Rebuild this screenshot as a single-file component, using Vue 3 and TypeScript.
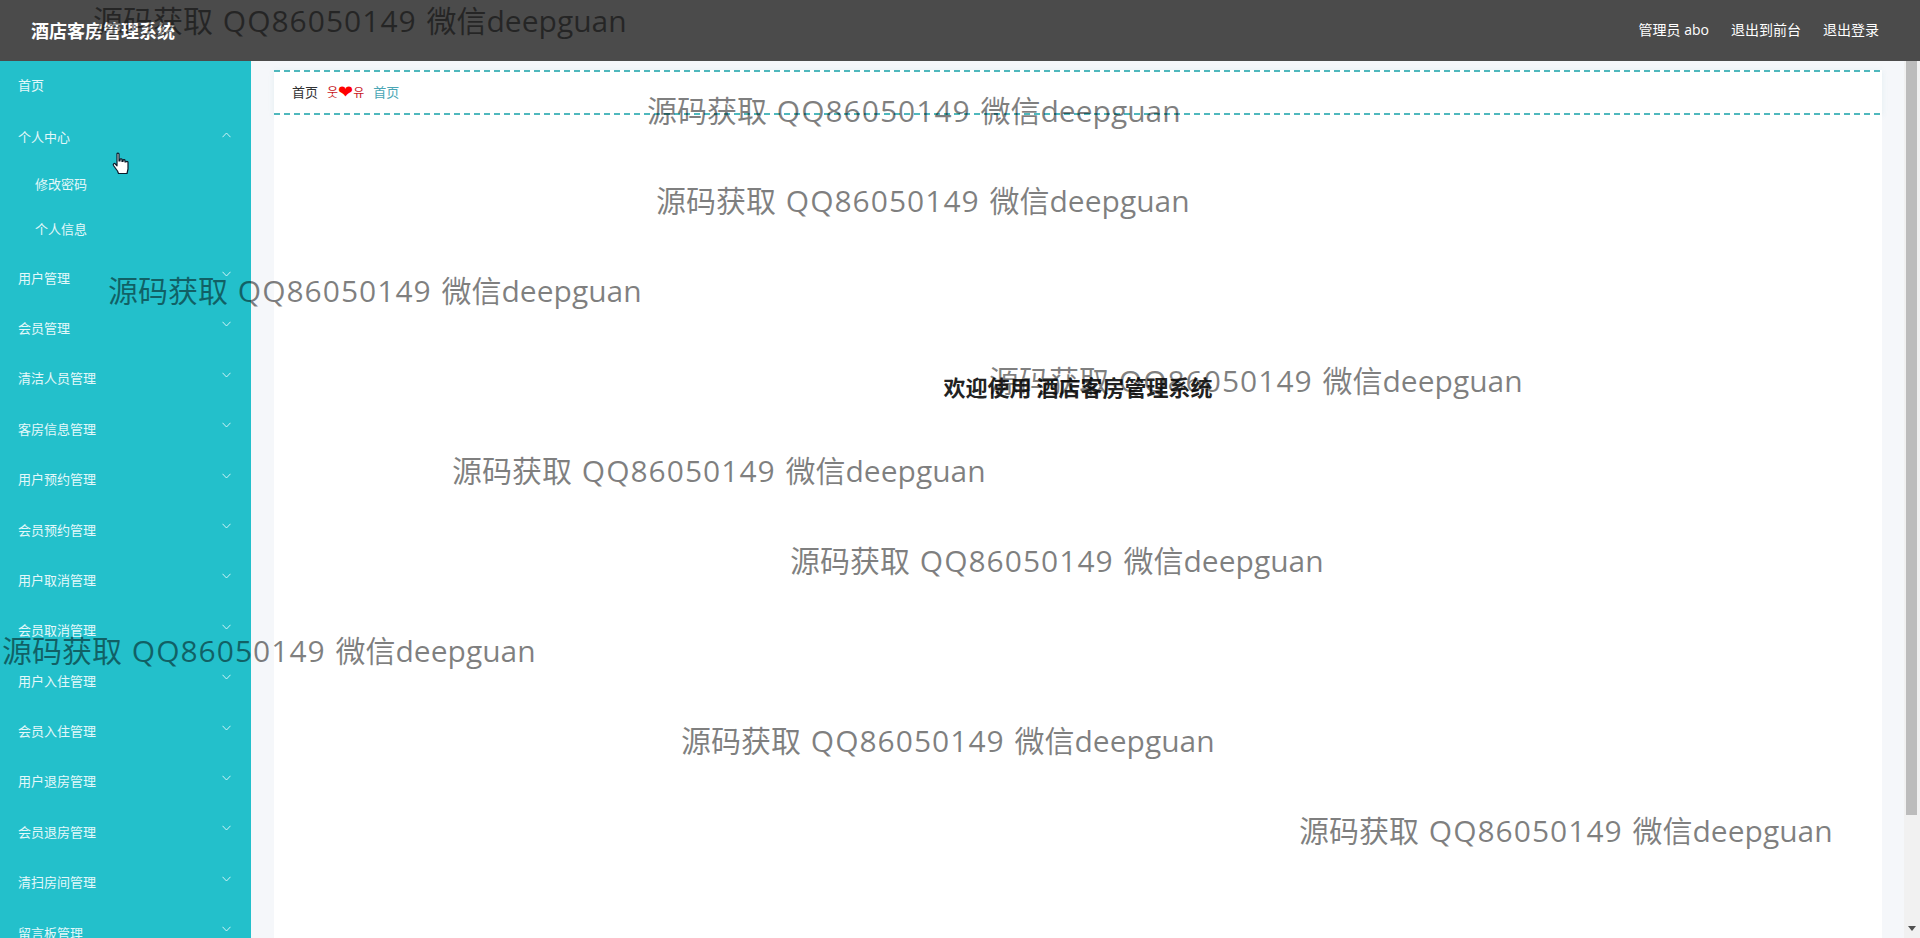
<script setup lang="ts">
interface MenuItem {
  label: string
  open?: boolean
  children?: string[]
}

const menus: MenuItem[] = [
  { label: '个人中心', open: true, children: ['修改密码', '个人信息'] },
  { label: '用户管理' },
  { label: '会员管理' },
  { label: '清洁人员管理' },
  { label: '客房信息管理' },
  { label: '用户预约管理' },
  { label: '会员预约管理' },
  { label: '用户取消管理' },
  { label: '会员取消管理' },
  { label: '用户入住管理' },
  { label: '会员入住管理' },
  { label: '用户退房管理' },
  { label: '会员退房管理' },
  { label: '清扫房间管理' },
  { label: '留言板管理' }
]

const marks = [
  { x: 93, y: 0 },
  { x: 647, y: 90 },
  { x: 656, y: 180 },
  { x: 108, y: 270 },
  { x: 989, y: 360 },
  { x: 452, y: 450 },
  { x: 790, y: 540 },
  { x: 2, y: 630 },
  { x: 681, y: 720 },
  { x: 1299, y: 810 }
]
</script>

<template>
  <div class="page">
    <header class="top">
      <div class="title">酒店客房管理系统</div>
      <div class="top-links">
        <span>管理员 abo</span>
        <span>退出到前台</span>
        <span>退出登录</span>
      </div>
    </header>

    <div class="body">
      <aside class="side">
        <div class="item home">首页</div>
        <template v-for="m in menus" :key="m.label">
          <div class="item">
            <span>{{ m.label }}</span>
            <svg class="chev" :class="{ up: m.open }" width="9" height="6" viewBox="0 0 9 6">
              <path d="M0.5 0.8 L4.5 5 L8.5 0.8" fill="none" stroke="#e4f8fa" stroke-width="0.9" />
            </svg>
          </div>
          <template v-if="m.open">
            <div v-for="c in m.children" :key="c" class="sub">{{ c }}</div>
          </template>
        </template>
      </aside>

      <main class="main">
        <div class="crumbs">
          <span class="crumb">首页</span>
          <span class="deco">웃<b>❤</b>유</span>
          <span class="crumb-now">首页</span>
        </div>
        <section class="panel">
          <h1 class="welcome">欢迎使用 酒店客房管理系统</h1>
        </section>
      </main>

      <div class="scroll">
        <div class="thumb"></div>
        <div class="arrow"></div>
      </div>
    </div>

    <div
      v-for="(w, i) in marks"
      :key="i"
      class="mark"
      :style="{ left: w.x + 'px', top: w.y + 'px' }"
    >源码获取 <span class="qq">QQ86050149</span> 微信deepguan</div>

    <svg class="cursor" width="18" height="24" viewBox="0 0 18 24">
      <path
        d="M5 2 C5 0.8 7 0.8 7 2 L7 9 L8 9 L8 7.6 C8 6.6 10 6.6 10 7.6 L10 9.5 L11 9.5 L11 8.4 C11 7.4 13 7.4 13 8.4 L13 10 L14 10 C14 9 16 9 16 10.2 L16 17 L15 21.5 L6.5 21.5 L5.5 19 L1.5 13.5 C0.6 12 2.4 10.8 3.4 12 L5 13.8 Z"
        fill="#fff"
        stroke="#0b1a2a"
        stroke-width="1.2"
        stroke-linejoin="round"
      />
    </svg>
  </div>
</template>

<style scoped>
.page {
  position: relative;
  display: flex;
  flex-direction: column;
  width: 1920px;
  height: 938px;
  overflow: hidden;
  font-family: 'Noto Sans CJK SC', 'Liberation Sans', sans-serif;
  font-size: 13px;
  background: #f5f7fa;
}

/* top bar */
.top {
  flex: none;
  display: flex;
  align-items: center;
  justify-content: space-between;
  height: 61px;
  padding: 0 41px 0 31px;
  box-sizing: border-box;
  background: #4b4b4b;
  color: #fff;
}
.title {
  font-size: 18px;
  font-weight: 700;
  line-height: 1;
  margin-top: -2px;
}
.top-links {
  display: flex;
  gap: 22px;
  font-family: 'Open Sans', 'Noto Sans CJK SC', sans-serif;
  font-size: 14px;
  line-height: 1;
  margin-top: -1px;
}

.body {
  flex: 1;
  display: flex;
  min-height: 0;
}

/* sidebar */
.side {
  flex: none;
  width: 251px;
  overflow: hidden;
  background: #23c0cb;
  color: #e4f8fa;
}
.item {
  display: flex;
  align-items: center;
  justify-content: space-between;
  height: 50.4px;
  padding: 0 20px 3px 18px;
  box-sizing: border-box;
}
.home {
  height: 50px;
  margin-bottom: 2px;
}
.sub {
  display: flex;
  align-items: center;
  height: 45px;
  padding: 0 0 4px 35px;
  box-sizing: border-box;
}
.chev {
  margin-top: -6px;
}
.chev.up {
  transform: rotate(180deg);
  margin-top: -3px;
}

/* content */
.main {
  flex: 1;
  display: flex;
  flex-direction: column;
  min-width: 0;
  padding: 9px 22px 0 23px;
}
.crumbs {
  flex: none;
  display: flex;
  align-items: center;
  height: 45px;
  padding: 0 0 2px 18px;
  box-sizing: border-box;
  background-color: #fff;
  background-image:
    repeating-linear-gradient(90deg, #4fb8bd 0 6px, transparent 6px 10px),
    repeating-linear-gradient(90deg, #4fb8bd 0 6px, transparent 6px 10px);
  background-size: 100% 2px;
  background-position: 0 0, 0 100%;
  background-repeat: no-repeat;
  box-shadow: 0 1px 6px rgba(64, 158, 165, 0.1);
}
.crumb {
  color: #303133;
}
.deco {
  display: flex;
  align-items: center;
  margin: 0 9px 0 9px;
  color: #c8161d;
  font-family: 'Noto Sans CJK KR', sans-serif;
  font-size: 12px;
}
.deco b {
  font-size: 18px;
  line-height: 1;
  color: #f00;
  font-family: 'DejaVu Sans', sans-serif;
  font-weight: 400;
}
.crumb-now {
  color: #4aa6b5;
}
.panel {
  flex: 1;
  display: flex;
  justify-content: center;
  background: #fff;
}
.welcome {
  margin: 257px 0 0;
  font-size: 22px;
  font-weight: 700;
  line-height: 1.3;
  color: #222;
}

/* page scrollbar */
.scroll {
  flex: none;
  position: relative;
  width: 16px;
  background: #f1f1f1;
}
.thumb {
  width: 11px;
  height: 754px;
  margin-left: 2px;
  background: #bcbcbc;
}
.arrow {
  position: absolute;
  left: 4px;
  bottom: 7px;
  border-left: 4px solid transparent;
  border-right: 4px solid transparent;
  border-top: 5px solid #505050;
}

/* watermark over everything */
.mark {
  position: absolute;
  white-space: nowrap;
  font-family: 'Open Sans', 'Noto Sans CJK SC', sans-serif;
  font-size: 30px;
  line-height: 42px;
  color: rgba(0, 0, 0, 0.5);
  pointer-events: none;
}
.qq {
  letter-spacing: 1px;
  margin: 0 2px;
}
.cursor {
  position: absolute;
  left: 112px;
  top: 152px;
}
</style>
